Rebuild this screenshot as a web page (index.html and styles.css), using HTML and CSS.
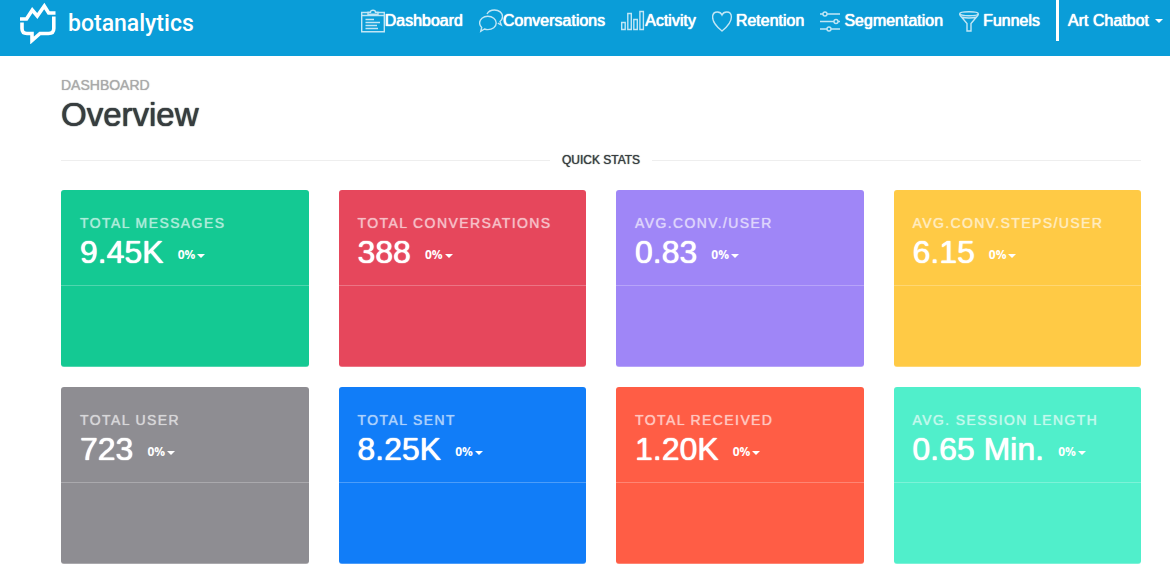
FILE: index.html
```html
<!DOCTYPE html>
<html lang="en">
<head>
<meta charset="utf-8">
<title>Botanalytics - Overview</title>
<link rel="stylesheet" href="styles.css">
</head>
<body>
<header class="topbar">
  <a class="brand" href="#">
    <svg class="brand-mark" viewBox="0 0 36 42" aria-hidden="true"><path d="M0 17H6.500L12.300 8L17.300 14L24.300 4L28.700 11H35.500"/><path d="M2 20.500V26.500Q2 31.500 7 31.500H12V38.500L20 31.500H28.500Q33.800 31.500 33.800 26.500V14.500"/></svg>
    <span class="brand-name">botanalytics</span>
  </a>
  <nav class="nav">
    <a class="nav-link" href="#"><svg class="nav-icon" viewBox="0 0 24 24" aria-hidden="true"><path d="M7 3.500H.7V22.800H23.300V3.500H17M.7 6.500H23.300M7 5.200V3.200H9.500Q9.500 1.200 12 1.200T14.500 3.200H17V5.200ZM4.500 10.500H13M4.500 13.500H19M4.500 16.500H16M4.500 19.500H17"/></svg>Dashboard</a>
    <a class="nav-link" href="#"><svg class="nav-icon" viewBox="0 0 24 24" aria-hidden="true"><path d="M8.800 7.300C13.500 7.300 17.200 10.200 17.200 14S13.500 20.600 8.800 20.600C7.500 20.600 6.500 20.400 5.500 20L1.800 22.300L2.700 18.500C1.400 17.200.6 15.700.6 14C.6 10.200 4.200 7.300 8.800 7.300Z"/><path d="M8 5C9.300 2.500 12.200 1 15.500 1C20 1 23.500 3.800 23.500 7.500C23.500 9.500 22.500 11.300 21 12.500L22.300 16L18.800 14.200"/></svg>Conversations</a>
    <a class="nav-link" href="#"><svg class="nav-icon" viewBox="0 0 24 24" aria-hidden="true"><path d="M.7 13.500H4.200V20.500H.7ZM6.800 4.500H10.300V20.500H6.800ZM12.800 10.500H16.300V20.500H12.800ZM18.900 2.500H22.400V20.500H18.900Z"/></svg>Activity</a>
    <a class="nav-link" href="#"><svg class="nav-icon" viewBox="0 0 24 24" aria-hidden="true"><path d="M10 22C5 18 .6 13.500 .6 8C.6 4.800 2.700 3 5.300 3C7.500 3 9.200 4.100 10 6C10.800 4.100 12.500 3 14.700 3C17.300 3 19.400 4.800 19.400 8C19.400 13.500 15 18 10 22Z"/></svg>Retention</a>
    <a class="nav-link" href="#"><svg class="nav-icon" viewBox="0 0 24 24" aria-hidden="true"><path d="M0 5H3M7 5H20M0 12.500H14M18 12.500H20M0 20H7M11 20H20"/><circle cx="5" cy="5" r="2"/><circle cx="16" cy="12.500" r="2"/><circle cx="9" cy="20" r="2"/></svg>Segmentation</a>
    <a class="nav-link" href="#"><svg class="nav-icon" viewBox="0 0 24 24" aria-hidden="true"><ellipse cx="10" cy="4.800" rx="9.300" ry="2"/><path d="M.7 4.800Q.9 6.500 2.500 8L8 14.500V22H12V14.500L17.500 8Q19.100 6.500 19.300 4.800M2.500 8Q10 10 17.500 8"/></svg>Funnels</a>
  </nav>
  <button class="account" type="button">Art Chatbot<span class="caret"></span></button>
</header>

<main class="page">
  <p class="eyebrow">DASHBOARD</p>
  <h1 class="title">Overview</h1>
  <h2 class="divider">QUICK STATS</h2>
  <section class="stats">
    <article class="card green"><div class="card-head"><h3 class="label">TOTAL MESSAGES</h3><p class="value">9.45K<span class="delta">0%<span class="caret small"></span></span></p></div></article>
    <article class="card red"><div class="card-head"><h3 class="label">TOTAL CONVERSATIONS</h3><p class="value">388<span class="delta">0%<span class="caret small"></span></span></p></div></article>
    <article class="card purple"><div class="card-head"><h3 class="label">AVG.CONV./USER</h3><p class="value">0.83<span class="delta">0%<span class="caret small"></span></span></p></div></article>
    <article class="card yellow"><div class="card-head"><h3 class="label">AVG.CONV.STEPS/USER</h3><p class="value">6.15<span class="delta">0%<span class="caret small"></span></span></p></div></article>
    <article class="card gray"><div class="card-head"><h3 class="label">TOTAL USER</h3><p class="value">723<span class="delta">0%<span class="caret small"></span></span></p></div></article>
    <article class="card blue"><div class="card-head"><h3 class="label">TOTAL SENT</h3><p class="value">8.25K<span class="delta">0%<span class="caret small"></span></span></p></div></article>
    <article class="card orange"><div class="card-head"><h3 class="label">TOTAL RECEIVED</h3><p class="value">1.20K<span class="delta">0%<span class="caret small"></span></span></p></div></article>
    <article class="card mint"><div class="card-head"><h3 class="label">AVG. SESSION LENGTH</h3><p class="value">0.65 Min.<span class="delta">0%<span class="caret small"></span></span></p></div></article>
  </section>
</main>
</body>
</html>
```
FILE: styles.css
```css
* { box-sizing: border-box; }
body, h1, h2, h3, p { margin: 0; }
body {
  background: #fff;
  color: #373d3f;
  font-family: "Liberation Sans", Arial, sans-serif;
}
h1, h2, h3 { font-weight: 400; }

.topbar {
  display: flex;
  align-items: flex-start;
  height: 56px;
  padding: 0 7px 0 20px;
  background: #0a9dd8;
  color: #fff;
}
.brand {
  display: flex;
  align-items: center;
  gap: 12px;
  height: 46px;
  color: #fff;
  text-decoration: none;
}
.brand-mark {
  width: 36px;
  height: 42px;
  fill: none;
  stroke: #fff;
  stroke-width: 3.6;
}
.brand-name {
  padding-top: 2px;
  font: 500 23px/28px Roboto, sans-serif;
}
.nav {
  display: flex;
  gap: 16px;
  margin-left: auto;
}
.nav-link {
  display: flex;
  align-items: center;
  height: 41px;
  color: #fff;
  font-size: 16px;
  text-decoration: none;
  text-shadow: 0 0 1px #fff, 0 0 1px #fff;
  white-space: nowrap;
}
.nav-icon {
  width: 24px;
  height: 24px;
  fill: none;
  stroke: #fff;
  stroke-width: 1.4;
  opacity: .75;
}
.account {
  display: flex;
  align-items: center;
  gap: 6px;
  height: 41px;
  margin-left: 16px;
  padding: 0 0 0 12px;
  border: 0;
  background: linear-gradient(#fff, #fff) left / 3px 100% no-repeat;
  color: #fff;
  font: 16px "Liberation Sans", Arial, sans-serif;
  text-shadow: 0 0 1px #fff, 0 0 1px #fff;
  white-space: nowrap;
}
.caret {
  border: 4px solid transparent;
  border-top-color: currentColor;
  border-bottom: 0;
}

.page { padding: 20px 29px 20px 61px; }
.eyebrow {
  color: #aaa;
  font-size: 14px;
  line-height: 18px;
  text-shadow: 0 0 1px #aaa;
}
.title {
  font-size: 33px;
  line-height: 42px;
  text-shadow: 0 0 1px #373d3f, 0 0 1px #373d3f;
}
.divider {
  display: flex;
  align-items: center;
  gap: 12px;
  margin: 16px 0 21px;
  font-size: 12px;
  line-height: 17px;
  text-shadow: 0 0 1px #373d3f;
}
.divider::before, .divider::after {
  content: "";
  flex: 1;
  height: 1px;
  background: #eee;
}
.stats {
  display: grid;
  grid-template-columns: repeat(4, 1fr);
  gap: 20px 30px;
}
.card {
  min-height: 177px;
  border-bottom: 1px solid rgba(255, 255, 255, .25);
  border-radius: 3px;
  color: #fff;
}
.card-head {
  padding: 24px 19px 13px;
  border-bottom: 1px solid rgba(255, 255, 255, .25);
}
.label {
  font-size: 14px;
  line-height: 18px;
  letter-spacing: .1em;
  opacity: .65;
  text-shadow: 0 0 1px #fff;
  white-space: nowrap;
}
.value {
  display: flex;
  align-items: center;
  gap: 14px;
  font-size: 32px;
  line-height: 40px;
  text-shadow: 0 0 1px #fff, 0 0 1px #fff;
}
.delta {
  display: flex;
  align-items: center;
  gap: 2px;
  padding-top: 6px;
  font: 700 12px/16px "Open Sans", sans-serif;
  text-shadow: none;
}
.small { margin-top: 2px; }

.green { background-color: #14c993; }
.red { background-color: #e6475c; }
.purple { background-color: #9f86f7; }
.yellow { background-color: #ffca45; }
.gray { background-color: #8e8d92; }
.blue { background-color: #117df8; }
.orange { background-color: #ff5d45; }
.mint { background-color: #50efcb; }
```
